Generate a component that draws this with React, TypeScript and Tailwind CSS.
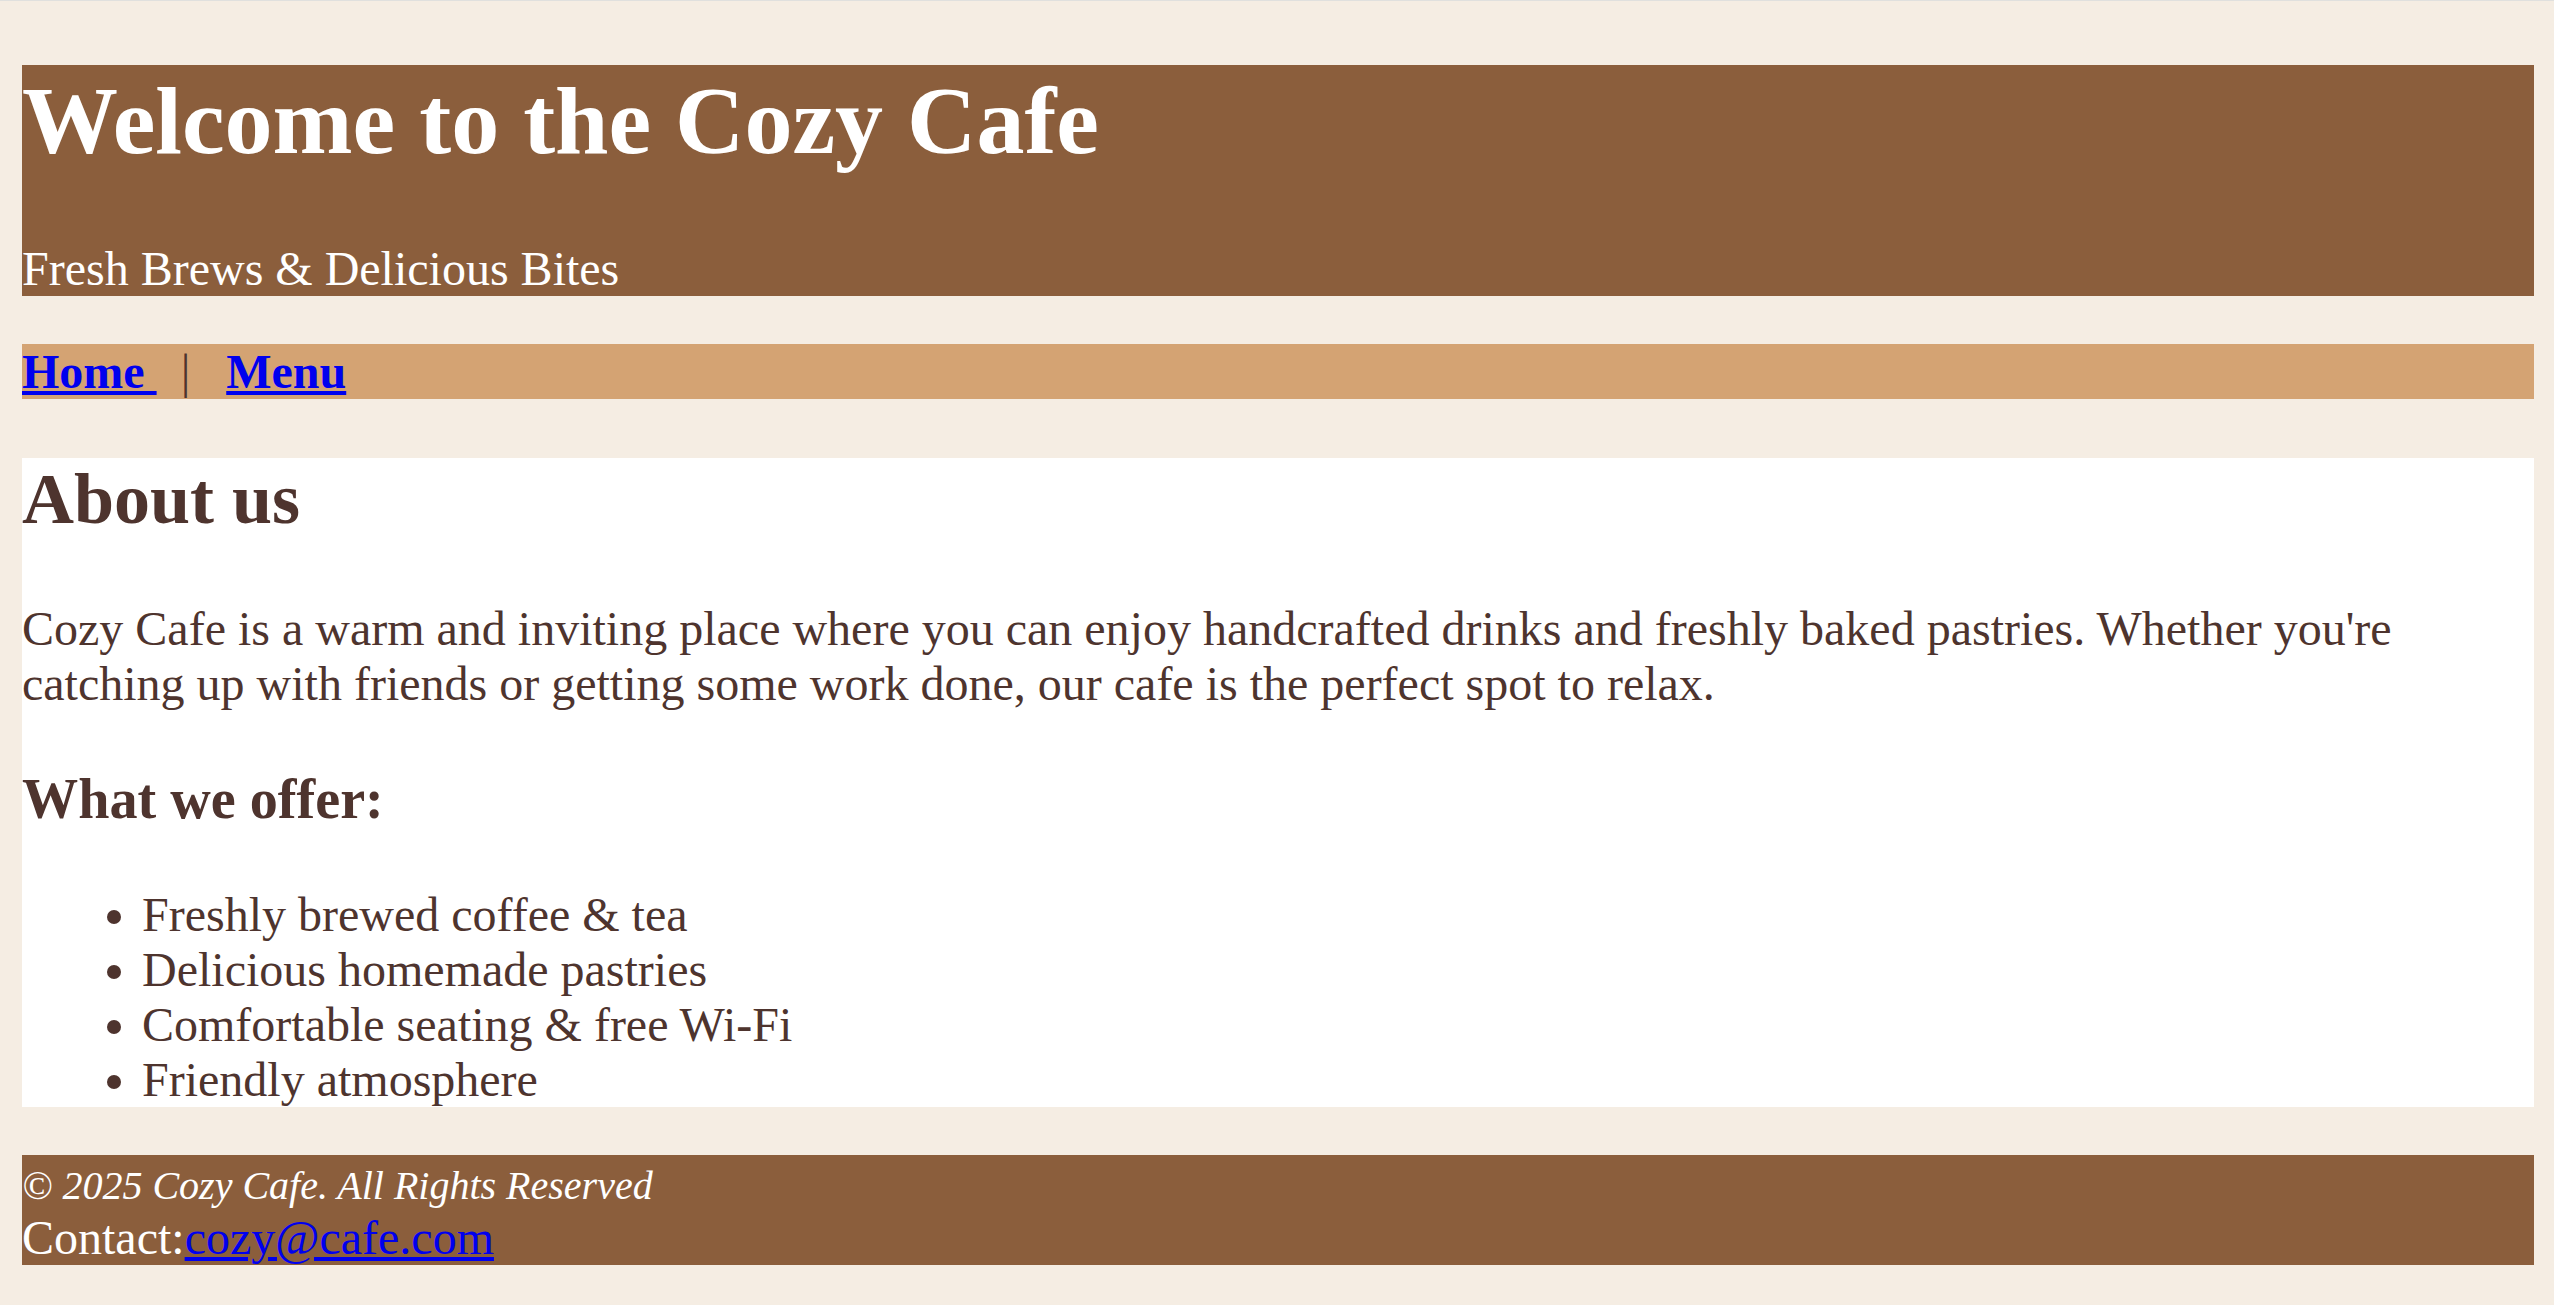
import React from "react";

export default function App() {
  return (
    <div className="min-h-screen bg-[#f5ede3] font-['Liberation_Serif','Times_New_Roman',serif] text-[48px] leading-[normal] text-[#4e342e]">
      <div className="h-px bg-[#e0e0de]" />
      <div className="pl-[22px] pr-[20px] pt-[64px]">
        <header className="bg-[#8b5e3c] text-white">
          <h1 className="text-[96px] font-bold leading-[normal]">Welcome to the Cozy Cafe</h1>
          <p className="mt-[65px] text-[48px] leading-[normal]">Fresh Brews &amp; Delicious Bites</p>
        </header>

        <nav className="mt-[48px] bg-[#d4a373] font-bold">
          <a href="#" className="text-[#0000ee] underline">{"Home\u00a0"}</a>
          <span className="ml-[24px] font-normal text-[#4e342e]">|</span>
          <a href="#" className="ml-[36px] text-[#0000ee] underline">Menu</a>
        </nav>

        <main className="mt-[59px] bg-white">
          <h2 className="text-[72px] font-bold leading-[normal]">About us</h2>
          <p className="mt-[60px]">
            Cozy Cafe is a warm and inviting place where you can enjoy handcrafted drinks and freshly baked pastries. Whether you're catching up with friends or getting some work done, our cafe is the perfect spot to relax.
          </p>
          <h3 className="mt-[56px] text-[56.16px] font-bold leading-[normal]">What we offer:</h3>
          <ul className="mt-[56px] list-disc pl-[120px]">
            <li>Freshly brewed coffee &amp; tea</li>
            <li>Delicious homemade pastries</li>
            <li>Comfortable seating &amp; free Wi-Fi</li>
            <li>Friendly atmosphere</li>
          </ul>
        </main>

        <footer className="mt-[48px] bg-[#8b5e3c] text-white">
          <div>
            <em className="text-[40px]">© 2025 Cozy Cafe. All Rights Reserved</em>
          </div>
          <div>
            Contact:<a href="#" className="text-[#0000ee] underline">cozy@cafe.com</a>
          </div>
        </footer>
      </div>
    </div>
  );
}
